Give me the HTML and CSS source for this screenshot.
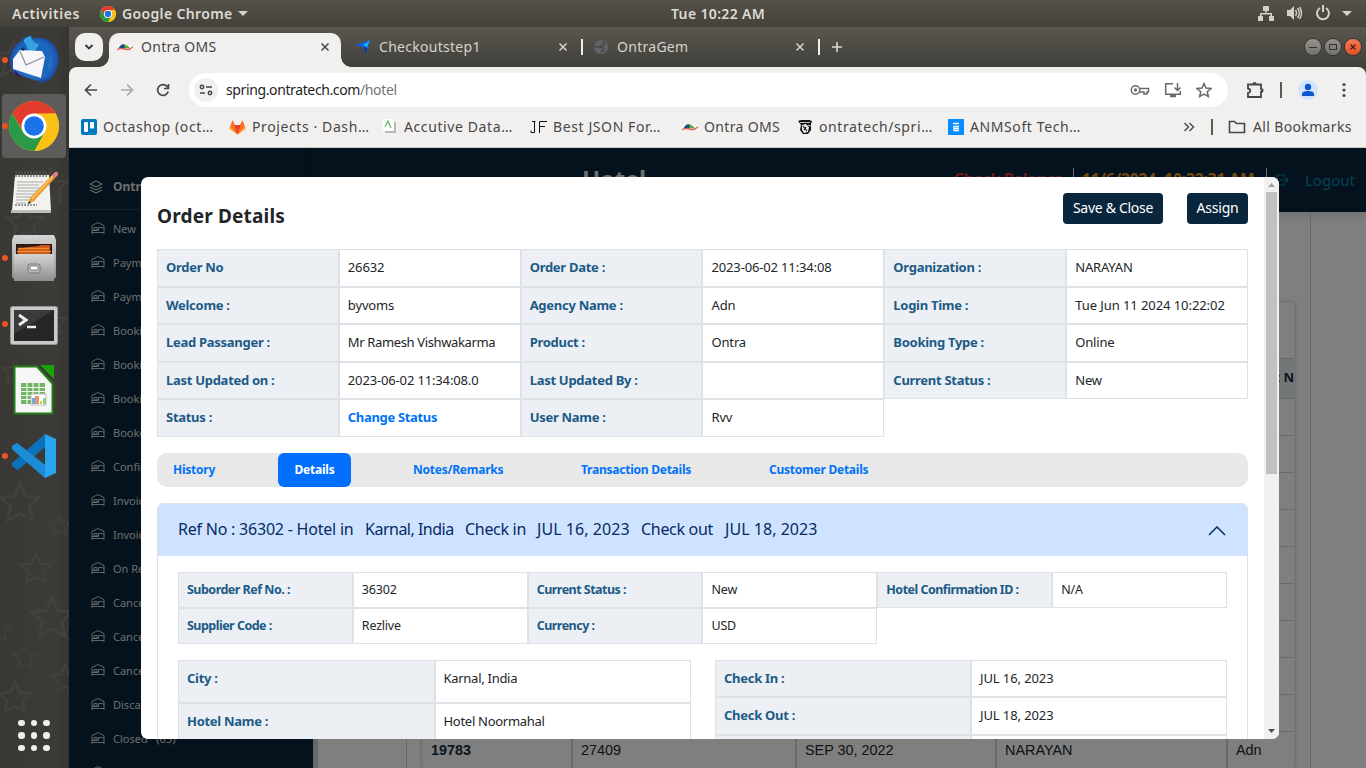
FILE: index.html
```html
<!DOCTYPE html>
<html lang="en">
<head>
<meta charset="utf-8">
<title>Ontra OMS</title>
<link rel="stylesheet" href="styles.css">
</head>
<body>
<svg class="defs" width="0" height="0">
  <defs>
    <symbol id="chrome" viewBox="0 0 50 50">
      <circle cx="25" cy="25" r="25" fill="#fbc116"/>
      <path d="M3.4 12.5A25 25 0 0 1 46.6 12.5L25 13 14.6 31z" fill="#e33b2e"/>
      <path d="M3.4 12.5A25 25 0 0 0 25.5 50L35.8 31.2 25 37.5 14.2 31.2z" fill="#2a9a47"/>
      <path d="M25.5 50A25 25 0 0 0 46.6 12.5H25L35.8 31.2z" fill="#fbc116"/>
      <circle cx="25" cy="25" r="12.5" fill="#fff"/><circle cx="25" cy="25" r="9.8" fill="#1a73e8"/>
    </symbol>
    <symbol id="ontra" viewBox="0 0 16 16">
      <path d="M0 6h16v5H0z" fill="#fafafa"/><path d="M1.500 9.500C4 4.500 8 3.500 13.500 9.500z" fill="#5fae3f"/><path d="M1.500 9.500C3 6.500 5 5.300 7 5.300L8 9.500z" fill="#1e4b85"/><path d="M0 10.600c4-2 6-.8 9.500 0 3 .6 4.500-.6 6.500-3" fill="none" stroke="#ee5a5a" stroke-width="1.200"/>
    </symbol>
    <symbol id="bed" viewBox="0 0 14 14">
      <path d="M1 13V4.500L7 1.500l6 3V13M1 11.500h12M3 6.500h3v2.500H3zM1 9.500h6.500V6.500H11c1 0 2 .7 2 1.500" fill="none" stroke="currentColor" stroke-width=".9"/>
    </symbol>
    <symbol id="close" viewBox="0 0 10 10"><path d="M1.500 1.500l7 7M8.500 1.500l-7 7" stroke="currentColor" stroke-width="1.500"/></symbol>
    <symbol id="star" viewBox="0 0 40 40"><path d="M20 3l5 11 12 1-9 8 3 12-11-6-11 6 3-12-9-8 12-1z" fill="none" stroke="currentColor" stroke-width="2.500"/></symbol>
  </defs>
</svg>
<div class="desktop">
  <header class="topbar">
    <span class="activities">Activities</span>
    <svg class="tb-chrome" width="16" height="16"><use href="#chrome"/></svg>
    <span class="appname">Google Chrome</span>
    <svg class="tb-caret" width="10" height="5"><path d="M0 0h10L5 5z" fill="#d3d0c8"/></svg>
    <span class="clock">Tue 10:22 AM</span>
    <span class="tray">
      <svg width="16" height="16" fill="#d3d0c8"><path d="M5 1h6v5H8.700v2H14v3h2v5h-5v-5h1.500V9.500h-9V11H5v5H0v-5h2V8h5.300V6H5z"/></svg>
      <svg width="17" height="16"><path d="M1 5h3l4-4v14l-4-4H1z" fill="#d3d0c8"/><path d="M9.500 5q2 3 0 6M11.500 3q3.500 5 0 10M13.500 2q4 6 0 12" fill="none" stroke="#d3d0c8" stroke-width="1.400"/></svg>
      <svg width="16" height="16" fill="none" stroke="#d3d0c8" stroke-width="2"><path d="M5 3a6 6 0 1 0 6 0M8 0v7"/></svg>
      <svg width="10" height="5"><path d="M0 0h10L5 5z" fill="#d3d0c8"/></svg>
    </span>
  </header>

  <nav class="dock">
    <svg class="dock-stars" width="69" height="741">
      <use href="#star" x="-8" y="10" width="44" height="44"/><use href="#star" x="30" y="140" width="40" height="40"/><use href="#star" x="4" y="175" width="42" height="42"/><use href="#star" x="38" y="280" width="30" height="30"/><use href="#star" x="0" y="330" width="30" height="30"/><use href="#star" x="-3" y="453" width="46" height="46"/><use href="#star" x="48" y="487" width="24" height="24"/><use href="#star" x="18" y="524" width="36" height="36"/><use href="#star" x="28" y="567" width="48" height="48"/><use href="#star" x="-14" y="590" width="26" height="26"/><use href="#star" x="12" y="618" width="26" height="26"/><use href="#star" x="-4" y="652" width="38" height="38"/><use href="#star" x="49" y="636" width="32" height="32"/>
    </svg>
    <div class="slot running">
      <svg width="50" height="50"><defs><radialGradient id="tb"><stop offset="0" stop-color="#35a0e8"/><stop offset=".6" stop-color="#247bd0"/><stop offset="1" stop-color="#1c4aa3"/></radialGradient></defs><path d="M12 6C14 2 21 0 24 1L22 4C34 0 47 6 49 19c2 10-2 22-11 27l-9 3 4-4-5 1L4 38C-2 26 0 14 12 6z" fill="url(#tb)"/><path d="M10 15C15 5 28 3 36 8l6 8-4 26-10 2 6-20z" fill="#1c66bd"/><path d="M17 9C12 6 16 2 22 1c0 4 4 8 8 8-2 6-6 8-10 9z" fill="#36a2df"/><path d="M4 24L11 15l22 1 3 6-4 21L4 34z" fill="#f7f7f9"/><path d="M11 16l6 14 18-8" fill="none" stroke="#8e8e98" stroke-width="1.200"/><circle cx="14" cy="14" r="1.800" fill="#14346b"/><path d="M5 35l9 9-7-4z" fill="#31114f"/></svg>
    </div>
    <div class="slot running active"><svg width="50" height="50"><use href="#chrome"/></svg></div>
    <div class="slot">
      <svg width="48" height="44"><path d="M5 5h34l2 36H2z" fill="#f2f2ef"/><path d="M1 40h40v3H1z" fill="#bdbdba"/><path d="M6 1v6M9 1v6M12 1v6M15 1v6M18 1v6M21 1v6M24 1v6M27 1v6M30 1v6M33 1v6M36 1v6" stroke="#555" stroke-width="1.200"/><path d="M7 12h26M7 15h22M7 18h24M7 21h26M6 24h22M6 27h18M6 30h14M6 33h10" stroke="#a9a9a9" stroke-width="1"/><path d="M5 35h22" stroke="#444" stroke-dasharray="2 1"/><path d="M18 34l2-6L42 5l3 3L24 31z" fill="#ef9a2a"/><path d="M22 29L43 6" stroke="#f8c873" stroke-width="1.200"/><path d="M42 5l3-3c2-1 4 1 3 3l-3 3z" fill="#d9808a"/><path d="M18 34l1-3 2 2z" fill="#222"/></svg>
    </div>
    <div class="slot running">
      <svg width="46" height="48"><defs><linearGradient id="gr" x2="0" y2="1"><stop offset="0" stop-color="#d5d5d5"/><stop offset="1" stop-color="#8e8e8e"/></linearGradient></defs><path d="M3 1h40l2 5v37l-2 2H3l-2-2V6z" fill="url(#gr)"/><path d="M5 10h36v14H5z" fill="#2b1a14"/><path d="M7 15l10-2 11-1 1-1h10v9H7z" fill="#c9551c"/><path d="M7 14.500h31M6 17.500h34" stroke="#f08a2d" stroke-width="1.500"/><path d="M3 20h40v27H3z" fill="url(#gr)"/><rect x="17" y="30" width="12" height="9" rx="2" fill="#bdbdbd" stroke="#777"/><rect x="19" y="32" width="8" height="4" rx="1" fill="#fff" stroke="#555" stroke-width=".7"/></svg>
    </div>
    <div class="slot running term">
      <svg width="48" height="40"><rect x=".5" y=".5" width="47" height="38" rx="2" fill="#c9c9c9" stroke="#969696"/><rect x="4" y="4" width="40" height="31" fill="#252727"/><path d="M4 4h40L4 28z" fill="#383b3a"/><path d="M9 9l7 5-7 5" fill="none" stroke="#eee" stroke-width="3"/><path d="M17 21h9" stroke="#eee" stroke-width="2.500"/></svg>
    </div>
    <div class="slot">
      <svg width="42" height="50"><path d="M1.500 1.500H24l15.500 17v30h-38z" fill="#f6f6f6" stroke="#227d12" stroke-width="2"/><path d="M27 0h14v14z" fill="#18a303"/><path d="M8 18h24v21H8z" fill="#72b465"/><path d="M8 22.500h24M8 26.500h24M8 30.500h24M8 34.500h24M14 18v21M20 18v21M26 18v21" stroke="#eefbe8" stroke-width="1.200"/><path d="M18 29h15v11H18z" fill="#fff" stroke="#bbb"/><path d="M19 33h3v6h-3z" fill="#6aa9e8"/><path d="M22 31h4v8h-4z" fill="#e39668"/><path d="M27 36h2v3h-2z" fill="#e9c342"/><path d="M30 33h3v6h-3z" fill="#90ce85"/></svg>
    </div>
    <div class="slot running">
      <svg width="44" height="44"><path d="M33 44L0 15v-3l5-3 28 22z" fill="#1c8cd6"/><path d="M33 0L0 29v3l6 4 27-23z" fill="#0b72ba"/><path d="M5 9l28 22v13L0 15v-3z" fill="#1c8cd6"/><path d="M33 0l11 5v34l-11 5z" fill="#29a5ef"/></svg>
    </div>
    <div class="apps"><i></i><i></i><i></i><i></i><i></i><i></i><i></i><i></i><i></i></div>
  </nav>

  <main class="browser">
    <div class="tabstrip">
      <span class="tabsearch"><svg width="10" height="8"><path d="M1.500 2l3.500 3.500L8.500 2" fill="none" stroke="#333" stroke-width="1.800"/></svg></span>
      <div class="tab current"><svg width="16" height="16"><use href="#ontra"/></svg><span>Ontra OMS</span><svg class="x" width="10" height="10"><use href="#close"/></svg></div>
      <div class="tab second"><svg width="16" height="16"><path d="M0 6L15 1l-5 14-2-7z" fill="#0b5fe0"/><path d="M15 1l-5 14-1-8z" fill="#0734a3"/><path d="M8 6l7-5-3 8z" fill="#22a8f3"/></svg><span>Checkoutstep1</span><svg class="x" width="10" height="10"><use href="#close"/></svg></div>
      <div class="tab third"><svg width="16" height="16"><circle cx="8" cy="8" r="7" fill="#62646a"/><path d="M9 2.500l2.500 1.500-1 2.500H7.500l-1 1.500L1.500 7.500M6.500 8l4 1v2.500L7.500 13" fill="none" stroke="#494843" stroke-width="1.500"/></svg><span>OntraGem</span><svg class="x" width="10" height="10"><use href="#close"/></svg></div>
      <svg class="plus" width="12" height="12"><path d="M6 1v10M1 6h10" stroke="#dad8d2" stroke-width="1.600"/></svg>
      <div class="winbtns">
        <span class="wb"><svg width="10" height="10"><path d="M1 5.500h8" stroke="#33322e"/></svg></span>
        <span class="wb"><svg width="10" height="10"><rect x="1.500" y="2.500" width="7" height="5" fill="none" stroke="#33322e"/></svg></span>
        <span class="wb red"><svg width="8" height="8"><path d="M1.500 1.500l5 5M6.500 1.500l-5 5" stroke="#4d1d10" stroke-width="1.200"/></svg></span>
      </div>
    </div>
    <div class="chromebars">
      <div class="toolbar">
        <svg class="nav" width="14" height="14"><path d="M13 7H2M7 1.500L1.500 7 7 12.500" fill="none" stroke="#474747" stroke-width="1.700"/></svg>
        <svg class="nav" width="14" height="14"><path d="M1 7h11M7 1.500L12.500 7 7 12.500" fill="none" stroke="#a9a9a9" stroke-width="1.700"/></svg>
        <svg class="nav" width="14" height="14"><path d="M12.200 8.500A5.400 5.400 0 1 1 11 3.300L12.500 5M12.500 1v4.500H8" fill="none" stroke="#474747" stroke-width="1.700"/></svg>
        <div class="omnibox">
          <span class="site"><svg width="14" height="12"><circle cx="3" cy="3" r="1.700"/><path d="M7 3h6M1 9h5"/><circle cx="11" cy="9" r="1.700"/></svg></span>
          <span class="url">spring.ontratech.com<em>/hotel</em></span>
          <svg width="20" height="12" class="ob"><circle cx="5.500" cy="6" r="4.200"/><circle cx="5.500" cy="6" r=".9"/><path d="M9.500 4.500H18.500V8h-1.500v2h-3V8h-4"/></svg>
          <svg width="18" height="16" class="ob"><path d="M9 1.700H1.700v10.600h14.600V9M13.500 1v7M10.500 5.500l3 3 3-3"/><path d="M6 14h6" stroke-width="2.500"/></svg>
          <svg width="16" height="16" class="ob"><path d="M8 1.500l2 4.600 5 .4-3.800 3.200 1.200 4.800L8 12l-4.400 2.500 1.200-4.800L1 6.500l5-.4z"/></svg>
        </div>
        <svg class="puzzle" width="18" height="18"><path d="M2 3.500h13V8a1.500 1.500 0 0 1 0 3v5H2v-4c3-.5 3-4 0-4.500z" fill="none" stroke="#474747" stroke-width="1.800"/><path d="M6.500 3a2 2 0 0 1 4 0zM15.500 7.500a2 2 0 0 1 0 4z" fill="#474747"/></svg>
        <i class="vbar"></i>
        <svg class="avatar" width="20" height="20"><circle cx="10" cy="10" r="10" fill="#d3e3fd"/><circle cx="10" cy="7" r="3.200" fill="#0b57d0"/><path d="M4 16v-2q0-3 6-3t6 3v2z" fill="#0b57d0"/></svg>
        <svg width="4" height="16" fill="#474747"><circle cx="2" cy="2.500" r="1.600"/><circle cx="2" cy="8" r="1.600"/><circle cx="2" cy="13.500" r="1.600"/></svg>
      </div>
      <div class="bookmarks">
        <div class="bm"><svg width="16" height="16"><rect width="16" height="16" rx="2" fill="#0079bf"/><rect x="3" y="3" width="4" height="10" rx="1" fill="#fff"/><rect x="9" y="3" width="4" height="6.500" rx="1" fill="#fff"/></svg><span>Octashop (oct…</span></div>
        <div class="bm"><svg width="17" height="16"><path d="M8.500 15.500L.5 9.500 3.500 1 6 6h5l2.500-5 3 8.500z" fill="#fc6d26"/><path d="M8.500 15.500L5.500 6h6z" fill="#e24329"/><path d="M8.500 15.500L.5 9.500l1-2z" fill="#fca326"/><path d="M8.500 15.500l8-6-1-2z" fill="#fca326"/></svg><span>Projects · Dash…</span></div>
        <div class="bm"><svg width="16" height="16"><path d="M3 3h11v11H3z" fill="#b9b9b9"/><path d="M1 0h11v12H1z" fill="#fdfdfd"/><path d="M3 8l3-6 3 7" fill="none" stroke="#59b95b" stroke-width="1.200"/></svg><span>Accutive Data…</span></div>
        <div class="bm"><svg width="17" height="14"><path d="M1 10.500v2h3.500V1.500M2 1.500h3.500M9.500 13V1.500H17M9.500 6.500H15" fill="none" stroke="#111" stroke-width="1"/></svg><span>Best JSON For…</span></div>
        <div class="bm"><svg width="16" height="16"><use href="#ontra"/></svg><span>Ontra OMS</span></div>
        <div class="bm"><svg width="16" height="16"><path d="M1 2l3-1h8l3 1-1 3 0 6-3 4H6l-3-4 1-5z" fill="#111"/><path d="M5 6l4-1 3 3-1 5-4 1-2-3z" fill="#e8e8e8"/><path d="M3 3.500h10M11 6l3 1" stroke="#e8e8e8" stroke-width=".8"/><path d="M6 7l4 5M7 11l2-3" stroke="#111" stroke-width="1.200"/></svg><span>ontratech/spri…</span></div>
        <div class="bm"><svg width="16" height="16"><rect width="16" height="16" rx="1" fill="#058cff"/><path d="M5 4.500h6M11 7.500H6v4h5M6 9.500h5" fill="none" stroke="#fff" stroke-width="1.300"/></svg><span>ANMSoft Tech…</span></div>
        <svg class="more" width="12" height="10"><path d="M1.500 1l4 4-4 4M6.500 1l4 4-4 4" fill="none" stroke="#474747" stroke-width="1.400"/></svg>
        <i class="vbar"></i>
        <svg class="folder" width="18" height="14"><path d="M1.500 12.500v-11h5l2 2h8v9z" fill="none" stroke="#474747" stroke-width="1.600"/></svg>
        <span class="allbm">All Bookmarks</span>
      </div>
    </div>

    <section class="page">
      <aside class="sidebar">
        <div class="brand"><svg width="14" height="14"><path d="M7 1l6 3-6 3-6-3zM1 7l6 3 6-3M1 10l6 3 6-3" fill="none" stroke="currentColor" stroke-width="1.100"/></svg><b>Ontra OMS</b></div>
        <ul class="menu">
          <li><svg><use href="#bed"/></svg>New</li>
          <li><svg><use href="#bed"/></svg>Payment</li>
          <li><svg><use href="#bed"/></svg>Payment</li>
          <li><svg><use href="#bed"/></svg>Booking</li>
          <li><svg><use href="#bed"/></svg>Booking</li>
          <li><svg><use href="#bed"/></svg>Booking</li>
          <li><svg><use href="#bed"/></svg>Booked</li>
          <li><svg><use href="#bed"/></svg>Confirmed</li>
          <li><svg><use href="#bed"/></svg>Invoice</li>
          <li><svg><use href="#bed"/></svg>Invoice</li>
          <li><svg><use href="#bed"/></svg>On Request</li>
          <li><svg><use href="#bed"/></svg>Cancel</li>
          <li><svg><use href="#bed"/></svg>Cancel</li>
          <li><svg><use href="#bed"/></svg>Cancelled</li>
          <li><svg><use href="#bed"/></svg>Discarded</li>
          <li><svg><use href="#bed"/></svg>Closed &nbsp; (65)</li>
          <li><svg><use href="#bed"/></svg></li>
        </ul>
      </aside>
      <div class="content">
        <div class="apphead">
          <h1>Hotel</h1>
          <b class="balance">Check Balance</b>
          <b class="now">11/6/2024, 10:22:31 AM</b>
          <span class="logout"><svg width="14" height="14"><path d="M9 4V2H2v10h7v-2M5 7h8M10.500 4.500L13 7l-2.500 2.500" fill="none" stroke="currentColor" stroke-width="1.200"/></svg>Logout</span>
        </div>
        <div class="frame">
          <div class="card">
            <div class="filters"></div>
            <div class="row head"><span></span><span></span><span></span><span></span><span>Agent N</span></div>
            <div class="row"></div><div class="row"></div><div class="row"></div><div class="row"></div><div class="row"></div><div class="row"></div><div class="row"></div><div class="row"></div><div class="row"></div>
            <div class="row"><span><b>19783</b></span><span>27409</span><span>SEP 30, 2022</span><span>NARAYAN</span><span>Adn</span></div>
          </div>
        </div>
      </div>
      <div class="backdrop"></div>

      <div class="modal">
        <div class="modal-body">
          <div class="modal-head"><h2>Order Details</h2><button class="btn save">Save &amp; Close</button><button class="btn assign">Assign</button></div>
          <div class="facts main">
            <b>Order No</b><span>26632</span><b>Order Date :</b><span>2023-06-02 11:34:08</span><b>Organization :</b><span>NARAYAN</span>
            <b>Welcome :</b><span>byvoms</span><b>Agency Name :</b><span>Adn</span><b>Login Time :</b><span class="stamp">Tue Jun 11 2024 10:22:02</span>
            <b>Lead Passanger :</b><span class="person">Mr Ramesh Vishwakarma</span><b>Product :</b><span>Ontra</span><b>Booking Type :</b><span>Online</span>
            <b>Last Updated on :</b><span>2023-06-02 11:34:08.0</span><b>Last Updated By :</b><span></span><b>Current Status :</b><span>New</span>
            <b>Status :</b><span class="link">Change Status</span><b>User Name :</b><span>Rvv</span>
          </div>
          <div class="tabs"><a class="t1">History</a><a class="t2">Details</a><a class="t3">Notes/Remarks</a><a class="t4">Transaction Details</a><a>Customer Details</a></div>
          <div class="accordion">
            <div class="acc-head">
              <span class="p1">Ref No : 36302 - Hotel in</span><span class="p2">Karnal, India</span><span class="p3">Check in</span><span class="p4">JUL 16, 2023</span><span class="p5">Check out</span><span class="p6">JUL 18, 2023</span>
              <svg width="18" height="10"><path d="M1 9l8-8 8 8" fill="none" stroke="#052c65" stroke-width="1.500"/></svg>
            </div>
            <div class="acc-body">
              <div class="facts sub">
                <b>Suborder Ref No. :</b><span>36302</span><b>Current Status :</b><span>New</span><b>Hotel Confirmation ID :</b><span>N/A</span>
                <b>Supplier Code :</b><span>Rezlive</span><b>Currency :</b><span>USD</span>
              </div>
              <div class="pair">
                <div class="facts left"><b>City :</b><span>Karnal, India</span><b>Hotel Name :</b><span>Hotel Noormahal</span></div>
                <div class="facts right"><b>Check In :</b><span>JUL 16, 2023</span><b>Check Out :</b><span>JUL 18, 2023</span><b></b><span></span></div>
              </div>
            </div>
          </div>
        </div>
        <div class="scroll"><svg width="15" height="15"><path d="M4 10h7L7.500 6z" fill="#a0a0a0"/></svg><i></i><svg width="15" height="15"><path d="M4 5h7L7.500 9z" fill="#505050"/></svg></div>
      </div>
    </section>
  </main>
</div>
</body>
</html>
```
FILE: styles.css
```css
* { box-sizing: border-box; }
body { margin: 0; font-family: "Noto Sans", sans-serif; }
svg { display: block; flex: none; }
.defs { position: absolute; }
.desktop { width: 1366px; height: 768px; overflow: hidden; display: grid; grid-template: 27px 741px / 69px 1297px; background: #3b3936; }

.topbar { grid-column: 1 / 3; display: flex; align-items: center; background: linear-gradient(#55524a, #43413b); color: #dfdbd2; font-size: 14px; font-weight: 600; padding-left: 12px; white-space: nowrap; letter-spacing: .35px; }
.topbar span { padding-bottom: 1px; }
.activities { width: 88px; letter-spacing: .55px; }
.appname { margin-left: 6px; width: 110px; }
.tb-caret { margin-left: 6px; }
.clock { margin-left: 423px; width: 98px; }
.tray { display: flex; align-items: center; margin-left: auto; padding-right: 14px; gap: 12px; }
.tray svg:last-child { margin-left: -1px; }

.dock { position: relative; background: linear-gradient(90deg, #3a3835, #3d3b38 80%, #373532); display: flex; flex-direction: column; padding-left: 2px; }
.dock-stars { position: absolute; left: 0; top: 0; color: #43413e; }
.slot { position: relative; width: 64px; height: 64px; margin-bottom: 2px; display: flex; align-items: center; justify-content: center; border-radius: 4px; }
.slot.active { background: #5e5c5a; }
.slot:first-of-type { margin-top: 1px; }
.slot.term { padding-top: 4px; }
.running::before { content: ""; position: absolute; left: 0; top: 29px; width: 6px; height: 6px; border-radius: 50%; background: #e95420; }
.apps { position: relative; display: grid; grid-template-columns: repeat(3, 6.500px); gap: 6px; margin: auto 0 17px 16px; }
.apps i { width: 6.500px; height: 6.500px; border-radius: 50%; background: #f0efec; }

.browser { display: flex; flex-direction: column; min-width: 0; background: #403f3a; }
.tabstrip { height: 40px; flex: none; display: flex; align-items: center; background: linear-gradient(#5a574f, #403f3a); color: #d6d3cb; font-size: 14px; }
.tabsearch { width: 28px; height: 28px; margin-left: 6px; background: #f2f0ef; border-radius: 10px; display: flex; align-items: center; justify-content: center; }
.tab { display: flex; align-items: center; height: 34px; letter-spacing: .28px; }
.tab span { padding-bottom: 2px; }
.tab svg:first-child { margin-right: 8px; }
.tab .x { margin-left: auto; }
.tab.current { position: relative; align-self: flex-end; width: 232px; margin-left: 6px; background: #f2f0ef; color: #474747; border-radius: 10px 10px 0 0; padding: 0 11px 6px 8px; }
.tab.current::before, .tab.current::after { content: ""; position: absolute; bottom: 0; width: 10px; height: 10px; }
.tab.current::before { left: -10px; background: radial-gradient(circle at 0 0, transparent 9.500px, #f2f0ef 10px); }
.tab.current::after { right: -10px; background: radial-gradient(circle at 100% 0, transparent 9.500px, #f2f0ef 10px); }
.tab.second { width: 213px; margin-left: 14px; }
.tab.third { width: 239px; margin-left: 13px; border-left: 2px solid #f2f0ef; border-right: 2px solid #f2f0ef; height: 16px; padding: 0 13px 0 10px; }
.plus { margin-left: 11px; }
.winbtns { display: flex; gap: 4px; margin-left: auto; padding-right: 5px; }
.wb { width: 16px; height: 16px; border-radius: 50%; background: linear-gradient(#94928b, #73716b); box-shadow: 0 0 0 1px #34332f; display: flex; align-items: center; justify-content: center; }
.wb.red { background: linear-gradient(#f47b58, #e4501f); }

.chromebars { height: 81px; flex: none; background: #f2f0ef; border-radius: 8px 8px 0 0; border-bottom: 1px solid #c9c9c9; }
.toolbar { display: flex; align-items: center; height: 46px; padding-left: 15px; }
.nav { margin-right: 22px; }
.nav:nth-child(3) { margin-right: 19px; }
.omnibox { width: 1039px; height: 34px; border-radius: 17px; background: #fff; display: flex; align-items: center; padding-left: 5px; padding-right: 16px; font-size: 14px; color: #1f1f1f; }
.site { width: 24px; height: 24px; border-radius: 50%; background: #f2f0ef; display: flex; align-items: center; justify-content: center; margin-right: 8px; }
.site svg { fill: none; stroke: #474747; stroke-width: 1.500; }
.url { letter-spacing: -.38px; margin-right: auto; padding-bottom: 2px; }
.url em { font-style: normal; color: #747474; }
.ob { fill: none; stroke: #6a6a6a; stroke-width: 1.500; margin-left: 14px; }
.puzzle { margin-left: 18px; }
.vbar { width: 2px; height: 16px; background: #5c5b56; }
.toolbar .vbar { margin-left: 16px; }
.avatar { margin: 0 24px 0 16px; }
.bookmarks { display: grid; grid-template-columns: 148px 153px 148px 152px 115px 151px 235px 28px 17px 25px 1fr; align-items: center; height: 28px; padding-left: 12px; font-size: 14px; color: #474747; white-space: nowrap; letter-spacing: .35px; }
.bookmarks span { padding-bottom: 2px; }
.bm { display: flex; align-items: center; gap: 6px; letter-spacing: .6px; }
.bm:nth-child(5) { letter-spacing: .35px; }

.page { position: relative; flex: 1; display: flex; background: #fff; overflow: hidden; }
.sidebar { width: 244px; background: #072438; color: #dcdcdc; flex: none; }
.brand { height: 62px; display: flex; align-items: center; gap: 10px; padding: 16px 0 0 20px; border-bottom: 1px solid #2a4255; font-size: 12px; }
.menu { list-style: none; margin: 1px 0 0; padding: 0 0 0 22px; font-size: 11px; }
.menu li { height: 34px; display: flex; align-items: center; gap: 8px; white-space: nowrap; }
.menu svg { width: 14px; height: 14px; }
.content { flex: 1; display: flex; flex-direction: column; border-left: 5px solid #d0d0d0; }
.apphead { height: 64px; flex: none; margin-left: -5px; background: #072438; display: flex; align-items: center; box-shadow: 0 4px 8px rgba(0,0,0,.12); color: #dcdcdc; white-space: nowrap; }
.apphead h1 { margin: 0 0 3px 269px; font-size: 24px; line-height: 30px; width: 372px; letter-spacing: -.3px; }
.balance { color: #dc3545; font-size: 15.500px; width: 119px; padding-bottom: 3px; letter-spacing: -.2px; }
.now { color: #e8941c; font-size: 15.500px; line-height: 22px; border: solid #dcdcdc; border-width: 0 1px; padding: 0 8px 3px; width: 194px; letter-spacing: -.1px; }
.logout { display: flex; align-items: center; gap: 16px; color: #0d86b0; font-size: 15px; margin-left: 8px; }
.frame { flex: 1; width: 905px; margin-left: 88px; border: solid #d2d2d2; border-width: 0 1px; padding: 90px 15px 0; }
.card { width: 873px; border: 1px solid #eee; border-radius: 4px; overflow: hidden; box-shadow: 0 0 4px rgba(0,0,0,.25); }
.filters { height: 55px; }
.row { height: 37px; display: grid; grid-template-columns: 150px 224px 200px 231px 67px; border-top: 1px solid #d4d4d4; font: 14.400px/36px "Liberation Sans", sans-serif; color: #212529; }
.row span { padding-left: 8px; border-right: 2px solid #d4d4d4; overflow: hidden; white-space: nowrap; }
.row span:last-child { border-right: 0; }
.row b { color: #12303f; }
.row.head { height: 40px; background: #e7ecec; font: 700 13px/37px "Noto Sans", sans-serif; color: #12303f; }
.row.head span:last-child { padding-left: 13px; }
.backdrop { position: absolute; inset: 0; background: rgba(0,0,0,.5); }

.modal { position: absolute; left: 72px; top: 29px; width: 1138px; height: 562px; background: #fff; border-radius: 7px; overflow: hidden; display: flex; color: #212529; }
.modal-body { width: 1123px; padding: 16px; overflow: hidden; }
.scroll { width: 15px; background: #f1f1f1; display: flex; flex-direction: column; }
.scroll i { width: 11px; height: 282px; background: #c1c1c1; margin: 0 auto auto 2px; }
.modal-head { display: flex; height: 56px; align-items: flex-start; }
.modal-head h2 { margin: 9px auto 0 0; font-size: 19px; line-height: 28px; letter-spacing: .18px; font-weight: 700; }
.btn { height: 31px; border: 0; border-radius: 4px; background: #0a263c; color: #fff; font: 14px "Noto Sans", sans-serif; padding: 0 0 2px; white-space: nowrap; }
.save { width: 100px; margin-right: 24px; letter-spacing: -.3px; }
.assign { width: 61px; letter-spacing: -.2px; }
.facts { display: grid; font-size: 13px; letter-spacing: -.15px; }
.facts > * { border: 1px solid #dee2e6; padding-left: 8px; display: flex; align-items: center; white-space: nowrap; overflow: hidden; }
.facts > b { background: #ecf0f5; color: #205a85; letter-spacing: -.28px; }
.main { grid-template-columns: repeat(6, 1fr); grid-auto-rows: 37.500px; width: 1091px; }
.main > * { padding-bottom: 1px; }
.main .link { color: #0073f7; font-weight: 700; letter-spacing: -.33px; }
.main .person { letter-spacing: -.36px; }
.main .stamp { letter-spacing: -.07px; }
.tabs { display: flex; height: 34px; margin-top: 16px; background: #e8e8e8; border-radius: 10px; align-items: center; font-size: 12px; font-weight: 700; color: #0073f7; padding-left: 16px; white-space: nowrap; letter-spacing: -.24px; }
.t1 { width: 105px; }
.t2 { width: 73px; line-height: 34px; text-align: center; background: #006ffd; border-radius: 6px; color: #fff; margin-right: 62px; }
.t3 { width: 168px; }
.t4 { width: 188px; }
.accordion { margin-top: 16px; border: 1px solid #dee2e6; border-radius: 6px 6px 0 0; height: 300px; }
.acc-head { height: 52px; background: #cfe2ff; border-radius: 5px 5px 0 0; display: flex; align-items: center; padding-left: 20px; color: #052c65; font-size: 16px; white-space: nowrap; letter-spacing: -.5px; }
.acc-head span { padding-bottom: 2px; }
.acc-head svg { margin: 2px 21px 0 auto; }
.p1 { width: 187px; letter-spacing: -.22px; }
.p2 { width: 100px; }
.p3 { width: 72px; letter-spacing: -.3px; }
.p4 { width: 104px; letter-spacing: .06px; }
.p5 { width: 84px; letter-spacing: -.3px; }
.p6 { letter-spacing: .04px; }
.acc-body { padding: 16px 20px; }
.sub { grid-template-columns: repeat(6, 1fr); grid-auto-rows: 36px; font-size: 12.500px; letter-spacing: -.2px; }
.sub > b { letter-spacing: -.52px; }
.pair { display: grid; grid-template-columns: 513px 512px; justify-content: space-between; align-items: start; margin-top: 16px; }
.left, .right { grid-template-columns: 1fr 1fr; letter-spacing: -.28px; }
.left { grid-auto-rows: 43px; }
.left > * { padding-bottom: 6px; }
.right { grid-auto-rows: 37.500px; letter-spacing: -.1px; }
.right > * { padding-bottom: 1px; }
```
